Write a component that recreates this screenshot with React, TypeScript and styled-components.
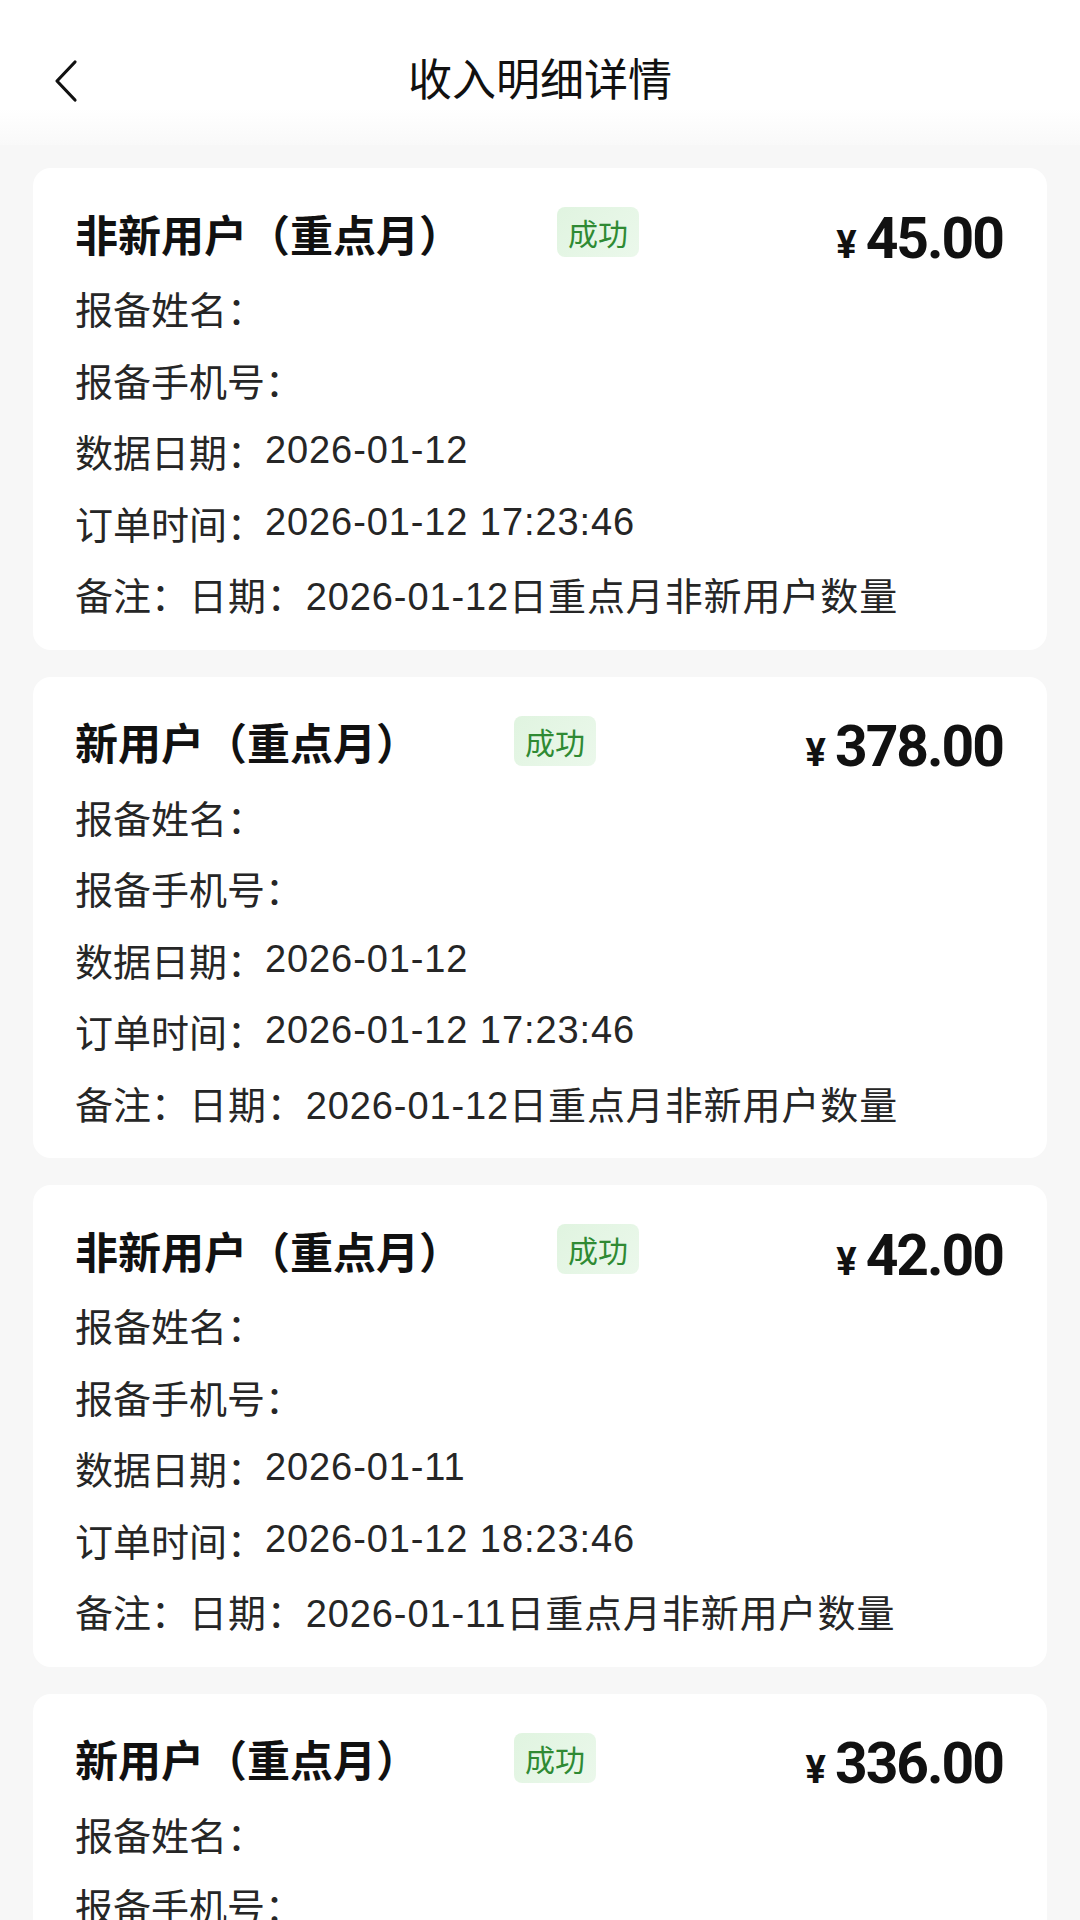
import React from "react";
import styled, { createGlobalStyle } from "styled-components";

const GlobalStyle = createGlobalStyle`
  html, body {
    margin: 0;
    padding: 0;
    background: #f7f7f7;
  }
  body {
    font-family: "Noto Sans CJK SC", "Noto Sans", sans-serif;
    -webkit-font-smoothing: antialiased;
  }
`;

const Page = styled.div`
  width: 1080px;
  height: 1920px;
  overflow: hidden;
  background: #f7f7f7;
  display: flex;
  flex-direction: column;
`;

const Header = styled.header`
  height: 145px;
  flex-shrink: 0;
  position: relative;
  display: flex;
  align-items: center;
  justify-content: center;
  background: linear-gradient(to bottom, #ffffff 0%, #ffffff 75%, #f9f9f9 100%);
`;

const BackButton = styled.button`
  position: absolute;
  left: 48px;
  top: 58px;
  width: 36px;
  height: 46px;
  padding: 0;
  border: none;
  background: transparent;
  display: flex;
  align-items: center;
  justify-content: center;
`;

const Title = styled.h1`
  margin: 0;
  margin-top: 9px;
  font-size: 44px;
  font-weight: 400;
  color: #111;
`;

const List = styled.main`
  display: flex;
  flex-direction: column;
  gap: 27px;
  padding: 23px 33px 0;
`;

const Card = styled.section`
  background: #ffffff;
  border-radius: 18px;
  padding: 37px 42px 20px;
  flex-shrink: 0;
`;

const CardHead = styled.div`
  height: 56px;
  display: flex;
  align-items: center;
  margin-bottom: 11px;
`;

const Kind = styled.h2`
  margin: 0;
  font-size: 43px;
  font-weight: 700;
  color: #111;
  line-height: 1;
`;

const Badge = styled.span`
  margin-left: 95px;
  margin-top: -2px;
  height: 50px;
  padding: 0 11px;
  border-radius: 8px;
  background: linear-gradient(135deg, #e0f4e0, #ebf8eb);
  color: #2f8a33;
  font-size: 30px;
  line-height: 50px;
`;

const Price = styled.div`
  margin-left: auto;
  margin-right: 2px;
  margin-top: 10px;
  display: flex;
  align-items: baseline;
  gap: 9px;
  font-family: Roboto, "Liberation Sans", sans-serif;
  font-weight: 700;
  color: #111;
`;

const Yen = styled.span`
  font-size: 38px;
`;

const Amount = styled.span`
  font-size: 57px;
  letter-spacing: -2px;
  line-height: 1;
`;

const Row = styled.div`
  height: 71.5px;
  display: flex;
  align-items: center;
  font-family: "Liberation Sans", "Noto Sans CJK SC", sans-serif;
  font-size: 38px;
  color: #262626;
  white-space: nowrap;
`;

const Label = styled.span``;

const Value = styled.span`
  letter-spacing: 0.9px;
`;

type Entry = {
  kind: string;
  amount: string;
  dataDate: string;
  orderTime: string;
  note: string;
};

const entries: Entry[] = [
  {
    kind: "非新用户（重点月）",
    amount: "45.00",
    dataDate: "2026-01-12",
    orderTime: "2026-01-12 17:23:46",
    note: "日期：2026-01-12日重点月非新用户数量",
  },
  {
    kind: "新用户（重点月）",
    amount: "378.00",
    dataDate: "2026-01-12",
    orderTime: "2026-01-12 17:23:46",
    note: "日期：2026-01-12日重点月非新用户数量",
  },
  {
    kind: "非新用户（重点月）",
    amount: "42.00",
    dataDate: "2026-01-11",
    orderTime: "2026-01-12 18:23:46",
    note: "日期：2026-01-11日重点月非新用户数量",
  },
  {
    kind: "新用户（重点月）",
    amount: "336.00",
    dataDate: "2026-01-11",
    orderTime: "2026-01-12 18:23:46",
    note: "日期：2026-01-11日重点月新用户数量",
  },
];

function BackIcon() {
  return (
    <svg width="30" height="44" viewBox="0 0 30 44" fill="none">
      <path
        d="M24 3 L6 22 L24 41"
        stroke="#111"
        strokeWidth="3.2"
        strokeLinecap="round"
        strokeLinejoin="round"
      />
    </svg>
  );
}

function IncomeCard({ entry }: { entry: Entry }) {
  return (
    <Card>
      <CardHead>
        <Kind>{entry.kind}</Kind>
        <Badge>成功</Badge>
        <Price>
          <Yen>¥</Yen>
          <Amount>{entry.amount}</Amount>
        </Price>
      </CardHead>
      <Row>
        <Label>报备姓名：</Label>
      </Row>
      <Row>
        <Label>报备手机号：</Label>
      </Row>
      <Row>
        <Label>数据日期：</Label>
        <Value>{entry.dataDate}</Value>
      </Row>
      <Row>
        <Label>订单时间：</Label>
        <Value>{entry.orderTime}</Value>
      </Row>
      <Row>
        <Label>备注：</Label>
        <Value>{entry.note}</Value>
      </Row>
    </Card>
  );
}

export default function App() {
  return (
    <>
      <GlobalStyle />
      <Page>
        <Header>
          <BackButton aria-label="返回">
            <BackIcon />
          </BackButton>
          <Title>收入明细详情</Title>
        </Header>
        <List>
          {entries.map((e, i) => (
            <IncomeCard key={i} entry={e} />
          ))}
        </List>
      </Page>
    </>
  );
}
